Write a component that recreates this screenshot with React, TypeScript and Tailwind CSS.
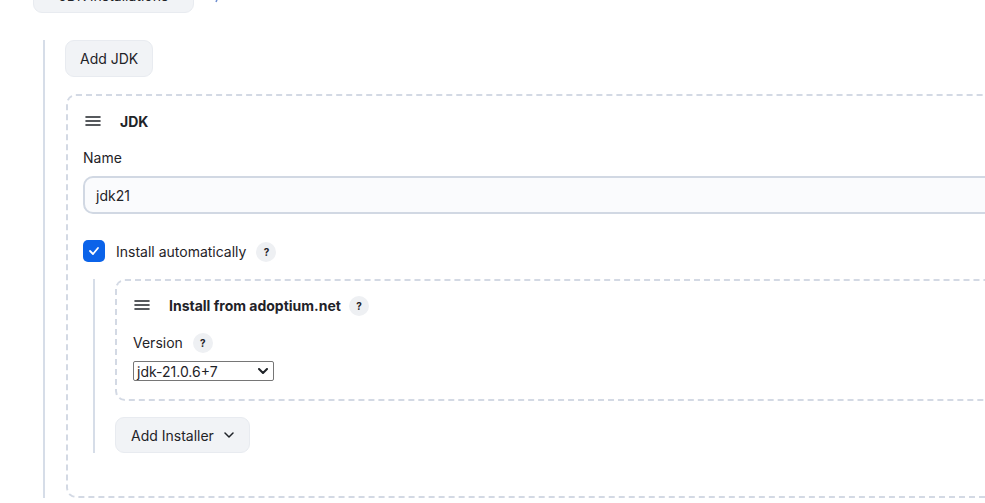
import React from "react";

function DragHandle() {
  return (
    <svg width="16" height="10" viewBox="0 0 16 10" className="shrink-0">
      <path d="M1 1h14M1 5h14M1 9h14" stroke="#1f2328" strokeWidth="1.6" strokeLinecap="round" />
    </svg>
  );
}

function Help() {
  return (
    <span className="inline-flex items-center justify-center w-[20px] h-[20px] rounded-full bg-[#eef0f3] text-[10px] font-bold text-[#1f2328]">
      ?
    </span>
  );
}

function Chevron({ width = 1.5 }: { width?: number }) {
  return (
    <svg width="10" height="6" viewBox="0 0 10 6">
      <path d="M1 1l4 4 4-4" fill="none" stroke="#1f2328" strokeWidth={width} strokeLinecap="round" strokeLinejoin="round" />
    </svg>
  );
}

export default function App() {
  return (
    <div
      className="w-[985px] h-[503px] overflow-hidden bg-white text-[14px] text-[#1f2328]"
      style={{ fontFamily: "Inter, 'Noto Sans', sans-serif" }}
    >
      <div className="w-[1120px]">
        {/* partially visible top button */}
        <div className="flex items-end gap-[19px] mt-[-21px] ml-[33px]">
          <button className="h-[34px] w-[161px] rounded-[9px] bg-[#f1f3f6] border border-[#e8ebf0] text-[14px] leading-[18px]">
            JDK installations
          </button>
          <svg width="8" height="14" viewBox="0 0 8 14" className="mb-[10px]">
            <path d="M1 1c4 2 4 8 2 12" fill="none" stroke="#6f8fd0" strokeWidth="1.5" />
          </svg>
        </div>

        <div className="ml-[43px] mt-[27px] border-l-2 border-[#d6dde8] pl-[20px]">
          <button className="h-[37px] px-[14px] rounded-[9px] bg-[#f1f3f6] border border-[#e8ebf0] text-[14px]">
            Add JDK
          </button>

          <div className="mt-[17px] ml-[1px] border-2 border-dashed border-[#d3d9e4] rounded-[10px] pl-[15px] pt-[16px] pb-[43px]">
            <div className="flex items-center h-[18px] gap-[19px] pl-[2px]">
              <DragHandle />
              <span className="font-bold text-[14px]">JDK</span>
            </div>

            <div className="mt-[19px] leading-[18px]">Name</div>
            <div className="mt-[9px] h-[38px] border-2 border-[#d1d8e3] rounded-[10px] bg-[#fafbfd] flex items-center pl-[11px]">
              jdk21
            </div>

            <div className="mt-[26px] flex items-center h-[22px]">
              <span className="w-[22px] h-[22px] rounded-[5px] bg-[#0b63e9] flex items-center justify-center">
                <svg width="12" height="10" viewBox="0 0 12 10">
                  <path d="M2 5l3 3 5-6" fill="none" stroke="white" strokeWidth="1.8" strokeLinecap="round" strokeLinejoin="round" />
                </svg>
              </span>
              <span className="ml-[11px]">Install automatically</span>
              <span className="ml-[10px]">
                <Help />
              </span>
            </div>

            <div className="mt-[17px] ml-[10px] border-l-2 border-[#d6dde8] pl-[20px]">
              <div className="border-2 border-dashed border-[#d3d9e4] rounded-[10px] pl-[16px] pt-[14px] pb-[18px]">
                <div className="flex items-center h-[20px]">
                  <span className="pl-[1px]">
                    <DragHandle />
                  </span>
                  <span className="ml-[19px] font-bold">Install from adoptium.net</span>
                  <span className="ml-[8px]">
                    <Help />
                  </span>
                </div>
                <div className="mt-[17px] flex items-center h-[20px]">
                  <span>Version</span>
                  <span className="ml-[10px]">
                    <Help />
                  </span>
                </div>
                <div className="mt-[9px] relative w-[141px] h-[20px] border border-[#767676] rounded-[2px] flex items-center pl-[3px] text-[14px]">
                  jdk-21.0.6+7
                  <span className="absolute right-[5px] top-[6px]">
                    <Chevron width={2} />
                  </span>
                </div>
              </div>

              <button className="mt-[16px] h-[36px] px-[15px] rounded-[9px] bg-[#f1f3f6] border border-[#e8ebf0] flex items-center gap-[10px]">
                Add Installer
                <Chevron />
              </button>
            </div>
          </div>
        </div>
      </div>
    </div>
  );
}
